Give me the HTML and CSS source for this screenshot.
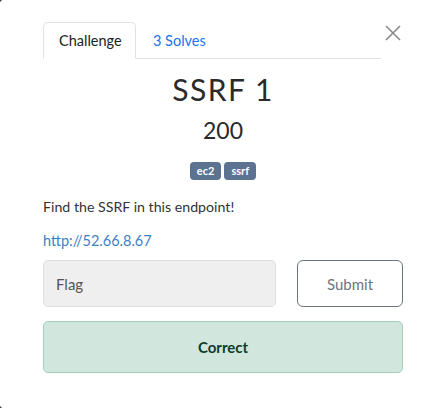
FILE: index.html
```html
<!DOCTYPE html>
<html>
<head>
<meta charset="utf-8">
<link rel="stylesheet" href="styles.css">
</head>
<body>
<div class="modal">
  <div class="head">
    <ul class="tabs">
      <li class="tab active">Challenge</li>
      <li class="tab link">3 Solves</li>
    </ul>
    <button class="close" aria-label="Close">
      <svg width="16" height="16" viewBox="0 0 16 16"><path d="M1 1L15 15M15 1L1 15" stroke="#8a8a8a" stroke-width="1.6" fill="none"/></svg>
    </button>
  </div>
  <h1 class="title">SSRF 1</h1>
  <div class="value">200</div>
  <div class="tags">
    <span class="badge">ec2</span>
    <span class="badge">ssrf</span>
  </div>
  <p class="desc">Find the SSRF in this endpoint!</p>
  <a class="url" href="#">http://52.66.8.67</a>
  <div class="form">
    <div class="input">Flag</div>
    <button class="submit">Submit</button>
  </div>
  <div class="alert">Correct</div>
</div>
</body>
</html>
```
FILE: styles.css
```css
* { box-sizing: border-box; }
html, body { margin: 0; padding: 0; }
body {
  background: #1a1a1a;
  width: 442px;
  height: 408px;
  font-family: Lato, "Open Sans", sans-serif;
  overflow: hidden;
}
.modal {
  background: #fff;
  width: 442px;
  height: 408px;
  border-radius: 3px 0 0 3px;
  padding: 22px 39px 0 43px;
}
.head {
  display: flex;
  align-items: flex-start;
}
.tabs {
  list-style: none;
  margin: 0;
  padding: 0;
  display: flex;
  width: 338px;
  border-bottom: 1px solid #dee2e6;
  height: 37px;
}
.tab {
  font-size: 14.5px;
  line-height: 20px;
  padding: 8px 12px 8px 15px;
  border: 1px solid transparent;
  border-radius: 5px 5px 0 0;
  height: 37px;
  margin-bottom: -1px;
}
.tab.active {
  color: #222;
  border-color: #dee2e6 #dee2e6 #fff;
  background: #fff;
  width: 93px;
}
.tab.link {
  color: #1a73f0;
  padding-left: 16px;
}
.close {
  border: 0;
  background: none;
  padding: 0;
  margin: 3px 0 0 4px;
  width: 16px;
  height: 16px;
  display: flex;
}
.title {
  margin: 10px 0 0;
  text-align: center;
  font-weight: 400;
  font-size: 30px;
  line-height: 40px;
  letter-spacing: 1.5px;
  color: #2a2a2a;
}
.value {
  text-align: center;
  font-size: 23px;
  font-weight: 400;
  line-height: 30px;
  margin-top: 6px;
  color: #2a2a2a;
}
.tags {
  display: flex;
  justify-content: center;
  gap: 3px;
  margin-top: 17px;
}
.badge {
  background: #5b7290;
  color: #fff;
  font-size: 11px;
  font-weight: 700;
  line-height: 18px;
  height: 18px;
  padding: 0 7px;
  border-radius: 4px;
}
.desc {
  margin: 17px 0 0;
  font-size: 14.2px;
  line-height: 20px;
  color: #333;
}
.url {
  display: block;
  margin-top: 14px;
  font-size: 14.5px;
  line-height: 20px;
  color: #3a7fc4;
  text-decoration: none;
}
.form {
  display: flex;
  justify-content: space-between;
  margin-top: 9px;
  width: 360px;
}
.input {
  width: 233px;
  height: 47px;
  background: #efefef;
  border: 1px solid #dfdfdf;
  border-radius: 5px;
  padding: 0 12px;
  font-size: 15px;
  color: #555;
  display: flex;
  align-items: center;
}
.submit {
  width: 106px;
  height: 47px;
  border: 1px solid #6c757d;
  background: #fff;
  border-radius: 6px;
  font-family: Lato, sans-serif;
  font-size: 15px;
  color: #6c757d;
}
.alert {
  margin-top: 14px;
  width: 360px;
  height: 52px;
  background: #d1e7dd;
  border: 1px solid #a3cfbb;
  border-radius: 5px;
  display: flex;
  align-items: center;
  justify-content: center;
  font-weight: 700;
  font-size: 15px;
  color: #0f3d2a;
}
```
